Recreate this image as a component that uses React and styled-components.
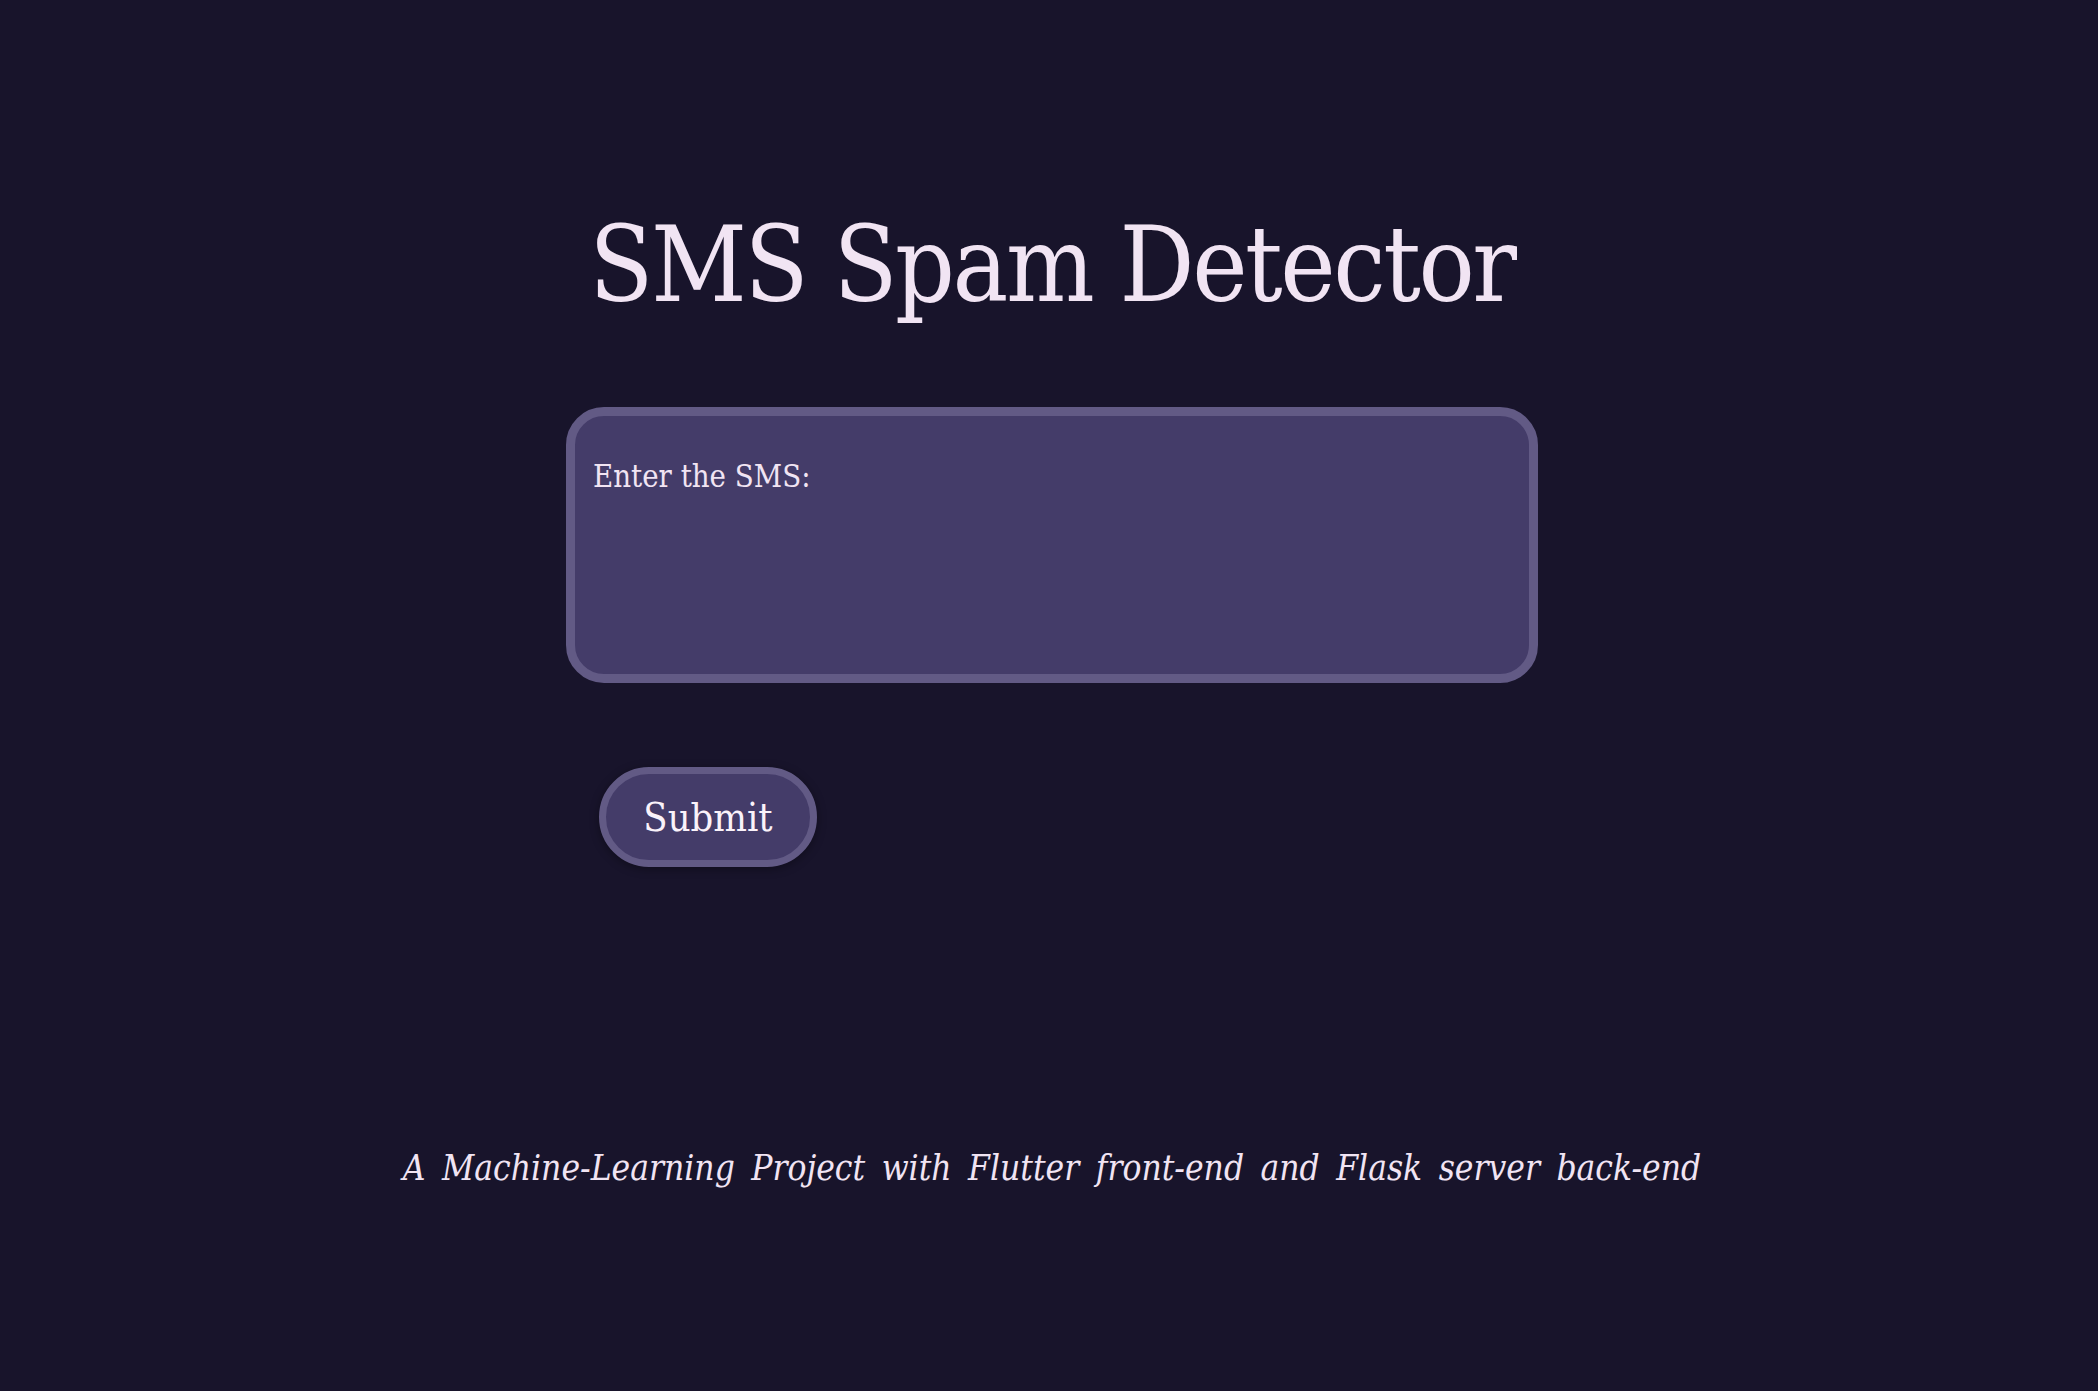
import React from "react";
import styled, { createGlobalStyle } from "styled-components";

const GlobalStyle = createGlobalStyle`
  html, body {
    margin: 0;
    padding: 0;
    background-color: #18142b;
  }
  body {
    font-family: "DejaVu Serif", "Liberation Serif", serif;
    color: #f1e4f3;
  }
`;

const Page = styled.div`
  min-height: 1391px;
  display: flex;
  flex-direction: column;
  align-items: center;
  padding: 199px 0 0 6px;
  box-sizing: border-box;
`;

const Column = styled.div`
  width: 972px;
  display: flex;
  flex-direction: column;
  align-items: center;
`;

const Title = styled.h1`
  margin: 0;
  font-family: "DejaVu Serif Condensed", "DejaVu Serif", serif;
  font-weight: normal;
  font-size: 104px;
  line-height: 132px;
  letter-spacing: -2.4px;
  color: #f1e4f3;
  white-space: nowrap;
`;

const SmsBox = styled.textarea`
  margin-top: 76px;
  width: 972px;
  height: 276px;
  box-sizing: border-box;
  border: 9px solid #625a85;
  border-radius: 38px;
  background-color: #443c69;
  padding: 42px 16px 16px 18px;
  font-family: "DejaVu Serif Condensed", "DejaVu Serif", serif;
  font-size: 30.8px;
  line-height: 36px;
  color: #f1e4f3;
  resize: none;
  outline: none;

  &::placeholder {
    color: #f1e4f3;
    opacity: 1;
  }
`;

const SubmitButton = styled.button`
  align-self: flex-start;
  margin: 84px 0 0 33px;
  width: 218px;
  height: 100px;
  box-sizing: border-box;
  border: 7px solid #625a85;
  border-radius: 50px;
  background-color: #443c69;
  box-shadow: 0 2px 10px rgba(0, 0, 0, 0.35);
  font-family: "DejaVu Serif Condensed", "DejaVu Serif", serif;
  font-size: 39.5px;
  color: #faf2fa;
  cursor: pointer;
  padding: 0;
`;

const Footer = styled.p`
  margin: 281px 0 0;
  font-family: "DejaVu Serif Condensed", "DejaVu Serif", serif;
  font-style: italic;
  font-size: 35px;
  line-height: 40px;
  word-spacing: 6.5px;
  color: #f1e4f3;
  white-space: nowrap;
`;

export default function App() {
  return (
    <>
      <GlobalStyle />
      <Page>
        <Column>
          <Title>SMS Spam Detector</Title>
          <SmsBox placeholder="Enter the SMS:" />
          <SubmitButton>Submit</SubmitButton>
        </Column>
        <Footer>
          A Machine-Learning Project with Flutter front-end and Flask server back-end
        </Footer>
      </Page>
    </>
  );
}
